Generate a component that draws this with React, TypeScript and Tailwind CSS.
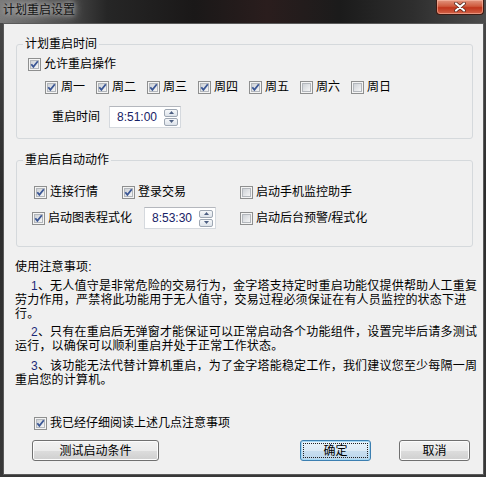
import React from 'react';
import clsx from 'clsx';

const CheckBox = ({ checked }: { checked?: boolean }) => (
  <svg width="13" height="13" viewBox="0 0 13 13" className="shrink-0">
    <rect x="0.5" y="0.5" width="12" height="12" fill="#f4f4f4" stroke="#8e8f8f" />
    <rect x="2.5" y="2.5" width="8" height="8" fill="url(#cb-grad)" stroke="#b3b7bc" />
    {checked && (
      <path d="M3.3 6.2 L5.4 8.9 L9.8 3.3" fill="none" stroke="#3b5795" strokeWidth="1.8" />
    )}
  </svg>
);

interface CheckProps {
  label: string;
  checked?: boolean;
  className?: string;
}

const Check = ({ label, checked, className }: CheckProps) => (
  <label className={clsx('flex items-center h-[16px] shrink-0', className)}>
    <CheckBox checked={checked} />
    <span className="ml-[3px] leading-[16px] whitespace-nowrap">{label}</span>
  </label>
);

const SpinBtn = ({ up }: { up?: boolean }) => (
  <div className="w-[14px] h-[8px] border border-[#9ea7b3] rounded-[2px] bg-[linear-gradient(#f6f8fa,#dde3ea)] flex items-center justify-center">
    <svg width="5" height="3" viewBox="0 0 5 3">
      {up ? <path d="M0 3 L2.5 0 L5 3 Z" fill="#4d5f82" /> : <path d="M0 0 L2.5 3 L5 0 Z" fill="#4d5f82" />}
    </svg>
  </div>
);

const TimeSpin = ({ value }: { value: string }) => (
  <div className="flex items-center w-[72px] h-[22px] bg-white border border-[#d5d9de] border-t-[#b4b7bd]">
    <span className="flex-1 pl-[7px] leading-[16px] text-[#172266]">{value}</span>
    <div className="flex flex-col gap-[1px] mr-[2px]">
      <SpinBtn up />
      <SpinBtn />
    </div>
  </div>
);

const Group = ({ title, className, children }: { title: string; className?: string; children: React.ReactNode }) => (
  <div className={clsx('relative ml-[12px] w-[457px] border border-[#d5d9dc] rounded-[3px]', className)}>
    <span className="absolute left-[6px] top-[-8px] px-[2px] leading-[14px] bg-[#f0f0f0]">{title}</span>
    {children}
  </div>
);

const Button = ({ label, className, focused }: { label: string; className?: string; focused?: boolean }) => (
  <button
    className={clsx(
      'h-[21px] rounded-[3px] border leading-[16px] p-[2px]',
      focused
        ? 'border-[#3c7fb1] bg-[linear-gradient(#eaf4fb_0%,#dceaf5_50%,#c9dff0_50%,#bcd6ec_100%)] shadow-[inset_0_0_0_1px_#a6d9f4]'
        : 'border-[#707070] bg-[linear-gradient(#f2f2f2_0%,#ebebeb_50%,#dddddd_50%,#cfcfcf_100%)] shadow-[inset_0_0_0_1px_#fcfcfc]',
      className
    )}
  >
    <div className={clsx('h-full w-full flex items-center justify-center', focused && 'border border-dotted border-[#222]')}>
      {label}
    </div>
  </button>
);

const days = [
  { label: '周一', checked: true },
  { label: '周二', checked: true },
  { label: '周三', checked: true },
  { label: '周四', checked: true },
  { label: '周五', checked: true },
  { label: '周六', checked: false },
  { label: '周日', checked: false },
];

const App = () => {
  return (
    <div className="w-[486px] h-[477px] overflow-hidden flex flex-col bg-[linear-gradient(180deg,#4a4a4a,#2c2c2c_40%,#383838)] font-['Liberation_Sans','Noto_Sans_CJK_SC',sans-serif] text-[12px] text-black">
      <svg width="0" height="0" className="absolute">
        <defs>
          <linearGradient id="cb-grad" x1="0" y1="0" x2="1" y2="1">
            <stop offset="0" stopColor="#cbcfd4" />
            <stop offset="1" stopColor="#f8f8f8" />
          </linearGradient>
        </defs>
      </svg>

      {/* title bar */}
      <div className="h-[23px] shrink-0 flex justify-between items-start bg-[linear-gradient(90deg,#7a7a7a_0%,#5a5a5a_10%,#262626_22%,#1a1818_40%,#2a1d1d_55%,#1b1b1b_70%,#2e2e2e_85%,#4c4c4c_100%)]">
        <div className="ml-[3px] mt-[3px] leading-[14px] text-[#141414] [text-shadow:0_0_4px_#bcbcbc,0_0_8px_#a8a8a8,0_0_12px_#9a9a9a]">
          计划重启设置
        </div>
        <div className="mr-[2px] w-[48px] h-[15px] rounded-b-[4px] border border-t-0 border-[#3d1a12] bg-[linear-gradient(#e2957f,#cf5a3d_45%,#c0351b_55%,#d2644a)] shadow-[inset_0_0_0_1px_rgba(255,200,180,0.5)] flex items-center justify-center">
          <svg width="12" height="10" viewBox="0 0 12 10">
            <path d="M2 1.5 L10 8.5 M10 1.5 L2 8.5" stroke="#4a2018" strokeWidth="3.6" strokeLinecap="round" />
            <path d="M2 1.5 L10 8.5 M10 1.5 L2 8.5" stroke="#ffffff" strokeWidth="2.2" strokeLinecap="round" />
          </svg>
        </div>
      </div>

      {/* client */}
      <div className="ml-[3px] w-[481px] h-[452px] shrink-0 bg-[#f0f0f0] border border-[#5a5a5a]">
        <Group title="计划重启时间" className="mt-[20px] h-[95px]">
          <div className="pl-[11px] pt-[11px] flex flex-col">
            <Check label="允许重启操作" checked />
            <div className="mt-[7px] ml-[17px] flex">
              {days.map((d) => (
                <Check key={d.label} label={d.label} checked={d.checked} className="w-[51px]" />
              ))}
            </div>
            <div className="mt-[11px] flex items-center">
              <span className="ml-[24px] w-[57px] leading-[16px]">重启时间</span>
              <TimeSpin value="8:51:00" />
            </div>
          </div>
        </Group>

        <Group title="重启后自动动作" className="mt-[21px] h-[87px]">
          <div className="pt-[23px] flex flex-col">
            <div className="flex pl-[17px]">
              <Check label="连接行情" checked className="w-[88px]" />
              <Check label="登录交易" checked className="w-[118px]" />
              <Check label="启动手机监控助手" />
            </div>
            <div className="mt-[7px] flex items-center pl-[15px]">
              <Check label="启动图表程式化" checked className="w-[112px]" />
              <TimeSpin value="8:53:30" />
              <Check label="启动后台预警/程式化" className="ml-[24px]" />
            </div>
          </div>
        </Group>

        <div className="ml-[11px] mt-[13px] leading-[14px] tracking-[0.2px] whitespace-nowrap">
          <div>使用注意事项:</div>
          <p className="mt-[5px]">
            <span className="block pl-[16px]"><span className="text-[#1c2a78]">1</span>、无人值守是非常危险的交易行为，金字塔支持定时重启功能仅提供帮助人工重复</span>
            <span className="block">劳力作用，严禁将此功能用于无人值守，交易过程必须保证在有人员监控的状态下进</span>
            <span className="block">行。</span>
          </p>
          <p className="mt-[4px]">
            <span className="block pl-[16px]"><span className="text-[#1c2a78]">2</span>、只有在重启后无弹窗才能保证可以正常启动各个功能组件，设置完毕后请多测试</span>
            <span className="block">运行，以确保可以顺利重启并处于正常工作状态。</span>
          </p>
          <p className="mt-[6px]">
            <span className="block pl-[16px]"><span className="text-[#1c2a78]">3</span>、该功能无法代替计算机重启，为了金字塔能稳定工作，我们建议您至少每隔一周</span>
            <span className="block">重启您的计算机。</span>
          </p>
        </div>

        <Check label="我已经仔细阅读上述几点注意事项" checked className="ml-[30px] mt-[28px] w-fit" />

        <div className="mt-[9px] ml-[28px] flex">
          <Button label="测试启动条件" className="w-[127px]" />
          <Button label="确定" focused className="w-[71px] ml-[141px]" />
          <Button label="取消" className="w-[71px] ml-[28px]" />
        </div>
      </div>
    </div>
  );
};

export default App;
